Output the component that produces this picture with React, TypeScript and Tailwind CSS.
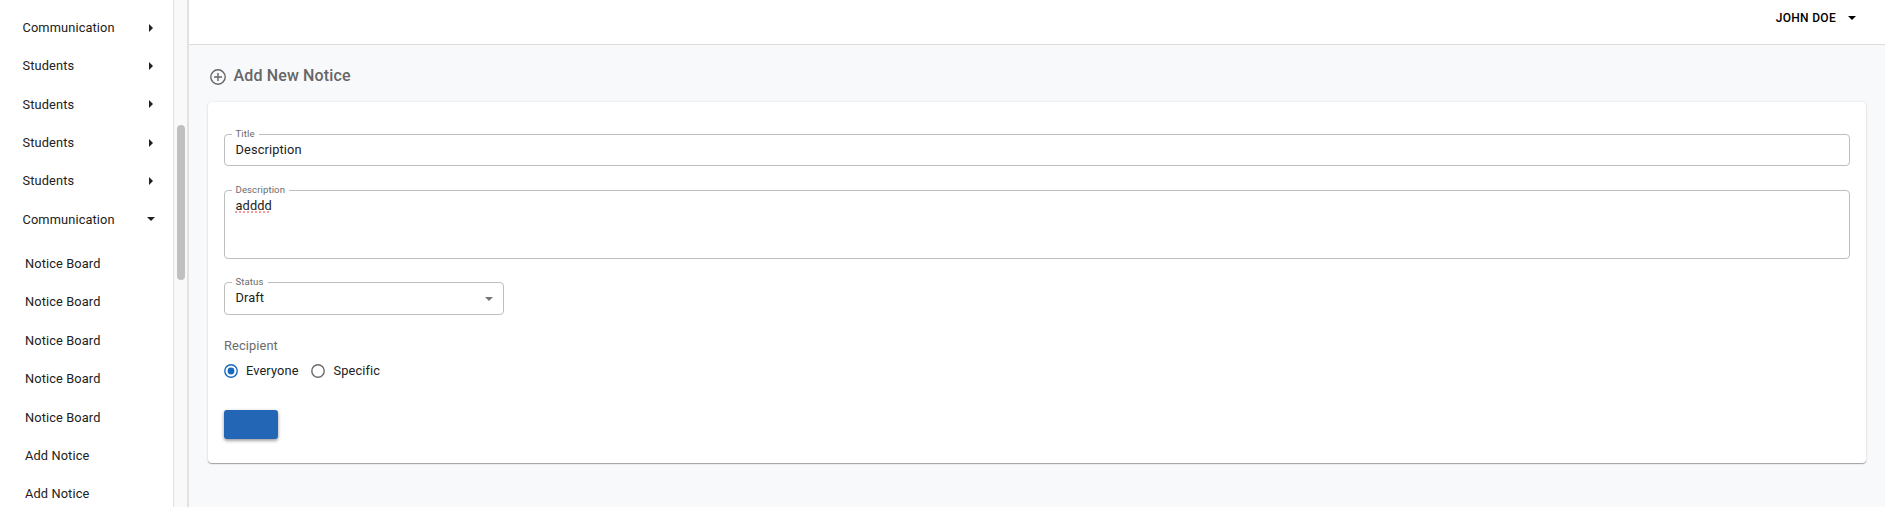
import type { ReactNode } from "react";

const menu = ["Communication", "Students", "Students", "Students", "Students", "Communication"];
const submenu = ["Notice Board", "Notice Board", "Notice Board", "Notice Board", "Notice Board", "Add Notice", "Add Notice"];

function Caret({ right = false, className = "" }: { right?: boolean; className?: string }) {
  return (
    <svg viewBox="0 0 8 8" className={`h-2 w-2 shrink-0 fill-current ${className}`}>
      {right ? <path d="M2 0l4 4-4 4z" /> : <path d="M0 2h8L4 6z" />}
    </svg>
  );
}

function Radio({ checked = false, className }: { checked?: boolean; className: string }) {
  return (
    <svg viewBox="0 0 14 14" className={`h-[14px] w-[14px] shrink-0 ${className}`}>
      <circle cx="7" cy="7" r="6.2" fill="none" stroke="currentColor" strokeWidth="1.4" />
      {checked && <circle cx="7" cy="7" r="3.4" fill="currentColor" />}
    </svg>
  );
}

function Sidebar() {
  return (
    <aside className="flex h-full w-[189px] shrink-0 border-r-2 border-[#e2e2e3]">
      <nav className="h-full w-[173px] overflow-hidden pt-[8.5px] text-[12.8px] tracking-[0.12px] text-[#212121]">
        <ul>
          {menu.map((label, i) => (
            <li key={i} className="flex h-[38.3px] items-center justify-between pl-[22.5px] pr-[18.5px]">
              <span>{label}</span>
              <Caret right={i < 5} />
            </li>
          ))}
        </ul>
        <ul className="mt-[6.2px]">
          {submenu.map((label, i) => (
            <li key={i} className="flex h-[38.4px] items-center pl-[25px]">{label}</li>
          ))}
        </ul>
      </nav>
      <div className="flex flex-1 justify-center border-l border-[#e3e3e3] bg-[#f9f9f9] pt-[125px]">
        <div className="h-[155px] w-2 rounded-full bg-[#c0c0c0]" />
      </div>
    </aside>
  );
}

function Field({ label, className, legend, children }: { label: string; className: string; legend: string; children: ReactNode }) {
  return (
    <fieldset className={`min-w-0 rounded-[4px] border border-[#bdbdbd] pr-[10px] pl-[7px] text-[12.8px] tracking-[0.12px] text-[#212121] ${className}`}>
      <legend className={`h-[10px] pl-[3.5px] text-[9.6px] leading-[10px] tracking-[0.09px] whitespace-nowrap text-[#6b6b6b] ${legend}`}>{label}</legend>
      {children}
    </fieldset>
  );
}

export default function App() {
  return (
    <div className="flex h-[507px] w-full overflow-hidden bg-white font-['Roboto',sans-serif]">
      <Sidebar />
      <div className="flex min-w-0 flex-1 flex-col bg-[#f8f9fb]">
        <header className="flex h-[45px] shrink-0 justify-end border-b border-[#dcdcdc] bg-white pt-[9px] pr-[29px]">
          <button className="flex h-[18px] items-center text-[12px] font-medium tracking-[0.3px] text-black">
            JOHN DOE
            <Caret className="ml-[12px]" />
          </button>
        </header>
        <main className="pr-[19px] pl-[19px]">
          <h1 className="flex h-[57px] items-center pt-[4px] text-[16px] font-medium tracking-[0.15px] text-[#666]">
            <svg viewBox="0 0 16 16" className="mt-[2px] mr-[8px] ml-[1.5px] h-4 w-4" fill="none" stroke="currentColor" strokeWidth="1.4">
              <circle cx="8" cy="8" r="7.2" />
              <path d="M8 4v8M4 8h8" />
            </svg>
            Add New Notice
          </h1>
          <section className="flex h-[361px] flex-col items-start rounded-[4px] bg-white px-[16px] pt-[27px] shadow-[0_1px_1px_#9ea0a3,0_0_3px_#00000018]">
            <Field label="Title" legend="w-[27px]" className="h-[37px] w-full">
              <div className="mt-[2px] pl-[3.5px] leading-[18px]">Description</div>
            </Field>
            <Field label="Description" legend="w-[57px]" className="mt-[19px] h-[74px] w-full">
              <div className="mt-[2px] pl-[3.5px] leading-[18px]">
                <span className="underline decoration-[#f79a9a] decoration-dotted decoration-2 underline-offset-[1px] [text-decoration-skip-ink:none]">adddd</span>
              </div>
            </Field>
            <Field label="Status" legend="w-[36px]" className="mt-[18px] h-[38px] w-[280px]">
              <div className="mt-[2px] flex items-center justify-between pl-[3.5px] leading-[18px]">
                Draft
                <Caret className="mt-[1px] text-[#757575]" />
              </div>
            </Field>
            <div className="mt-[21px] text-[12.8px] leading-[20px] tracking-[0.12px] text-[#6b6b6b]">Recipient</div>
            <div className="mt-[5px] flex h-5 items-center text-[12.8px] tracking-[0.12px] text-[#212121]">
              <Radio checked className="mr-[8px] text-[#1769c0]" />
              <span>Everyone</span>
              <Radio className="mr-[9px] ml-[12px] text-[#6b6b6b]" />
              <span>Specific</span>
            </div>
            <button aria-label="Save" className="mt-[29px] h-[29px] w-[54px] rounded-[3px] bg-[#2366b5] shadow-[0_2px_3px_#00000040,0_1px_4px_#00000030]" />
          </section>
        </main>
      </div>
    </div>
  );
}
